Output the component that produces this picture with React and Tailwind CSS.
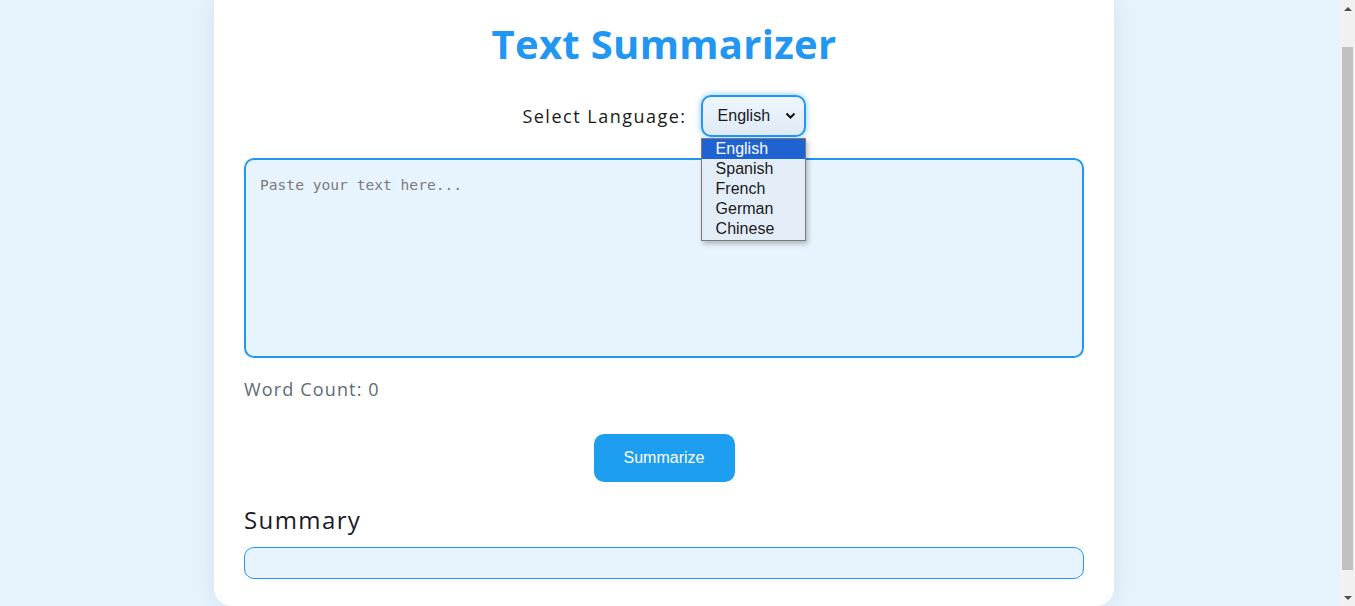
import React from "react";

const sans = { fontFamily: '"Open Sans", "Liberation Sans", sans-serif' };

function Scrollbar() {
  return (
    <div className="w-[15px] h-[606px] bg-[#f1f1f1] flex flex-col items-center shrink-0">
      <div className="h-[17px] w-full flex items-center justify-center">
        <div className="w-0 h-0 border-l-[4px] border-r-[4px] border-b-[4px] border-l-transparent border-r-transparent border-b-[#505050]" />
      </div>
      <div className="mt-[30px] w-[11px] h-[523px] bg-[#c1c1c1]" />
      <div className="flex-1" />
      <div className="h-[17px] w-full flex items-center justify-center">
        <div className="w-0 h-0 border-l-[4px] border-r-[4px] border-t-[4px] border-l-transparent border-r-transparent border-t-[#505050]" />
      </div>
    </div>
  );
}

function LanguageSelect() {
  const items = ["English", "Spanish", "French", "German", "Chinese"];
  return (
    <div className="relative">
      <div
        className="w-[105px] h-[42px] rounded-[10px] border-2 border-[#2196f3] bg-gradient-to-b from-[#eef6fd] to-[#dfeaf6] shadow-[0_0_6px_rgba(33,150,243,0.55)] flex items-center pl-[15px] pr-[8px] text-[16px] text-[#1a1a1a]"
        style={{ fontFamily: '"Liberation Sans", Arial, sans-serif' }}
      >
        <span className="flex-1">English</span>
        <svg width="11" height="8" viewBox="0 0 11 8">
          <path d="M1.5 1.5 L5.5 5.5 L9.5 1.5" fill="none" stroke="#111" strokeWidth="2" />
        </svg>
      </div>
      <div
        className="absolute left-0 top-[43px] w-[105px] border border-[#7a7a7a] bg-[#e3edf8] shadow-[2px_3px_5px_rgba(0,0,0,0.25)] z-10 pb-[1px]"
        style={{ fontFamily: '"Liberation Sans", Arial, sans-serif' }}
      >
        {items.map((it, i) => (
          <div
            key={it}
            className={
              "h-[20px] leading-[19px] pl-[14px] text-[16px] " +
              (i === 0 ? "bg-[#1f62d2] text-white" : "text-[#1a1a1a]")
            }
          >
            {it}
          </div>
        ))}
      </div>
    </div>
  );
}

export default function App() {
  return (
    <div className="w-[1355px] h-[606px] overflow-hidden bg-[#e7f3fc] flex" style={sans}>
      <div className="flex-1 flex justify-center pr-[12px]">
        <div className="w-[900px] h-[606px] bg-white rounded-b-[18px] shadow-[0_0_22px_rgba(40,110,170,0.13)] px-[30px] pt-[20px] flex flex-col">
          <h1 className="text-center text-[40px] leading-[48px] font-bold text-[#2196f3] tracking-[0.3px]">
            Text Summarizer
          </h1>
          <div className="mt-[27px] flex items-center justify-center gap-[14px]">
            <span className="text-[18px] text-[#1a1a1a] tracking-[1.5px]">Select Language:</span>
            <LanguageSelect />
          </div>
          <textarea
            className="mt-[21px] h-[200px] w-full resize-none rounded-[10px] border-2 border-[#2196f3] bg-[#e8f4fd] px-[14px] py-[14px] text-[14.6px] leading-[22px] outline-none placeholder:text-[#7a7a7a]"
            style={{ fontFamily: '"DejaVu Sans Mono", "Liberation Mono", monospace' }}
            placeholder="Paste your text here..."
          />
          <div className="mt-[18px] text-[18px] leading-[27px] text-[#5e6a78] tracking-[1.15px]">Word Count: 0</div>
          <div className="mt-[31px] flex justify-center">
            <button
              className="w-[141px] h-[48px] rounded-[10px] bg-[#1e9ef0] text-white text-[16px]"
              style={{ fontFamily: '"Liberation Sans", Arial, sans-serif' }}
            >
              Summarize
            </button>
          </div>
          <h2 className="mt-[22px] text-[24px] leading-[32px] text-[#1a1a2a] tracking-[1.4px]">Summary</h2>
          <div className="mt-[11px] h-[32px] rounded-[10px] border border-[#2196f3] bg-[#e8f4fd]" />
        </div>
      </div>
      <Scrollbar />
    </div>
  );
}
